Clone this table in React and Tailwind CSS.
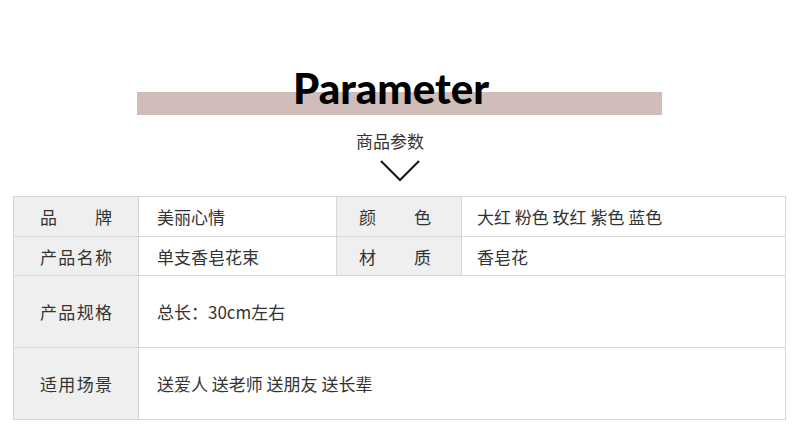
import React from 'react';

const cjk = { fontFamily: '"Noto Sans CJK SC", "Noto Sans", sans-serif' };

function Label({ chars, inner = '' }) {
  // label text is spread over a fixed width, like the 品 牌 cells
  return (
    <div className="flex h-full items-center justify-center bg-[#efefef] border-r border-b border-[#d6d6d6]">
      <div className={`flex w-[72px] justify-between text-[17px] leading-none text-[#333] ${inner}`}>
        {chars.split('').map((c, i) => (
          <span key={i}>{c}</span>
        ))}
      </div>
    </div>
  );
}

function Value({ children, span, pad = 'pl-[18px]' }) {
  return (
    <div
      className={`flex h-full items-center ${pad} text-[17px] leading-none text-[#333] border-r border-b border-[#d6d6d6] ${
        span ? 'col-span-3' : ''
      }`}
    >
      {children}
    </div>
  );
}

export default function App() {
  return (
    <div className="w-[800px] h-[438px] bg-white overflow-hidden flex flex-col" style={cjk}>
      {/* Heading band */}
      <div className="relative mt-[92px] ml-[137px] w-[525px] h-[23px] bg-[#d0bdb9]">
        <span
          className="absolute left-[156px] bottom-[6px] text-[42px] leading-none font-black text-black whitespace-nowrap"
          style={{ fontFamily: 'Lato, "Open Sans", sans-serif' }}
        >
          Parameter
        </span>
      </div>

      <div className="mt-[17px] ml-[356px] text-[17px] leading-[17px] text-[#333]">商品参数</div>

      <div className="mt-[11px] flex justify-center">
        <svg width="40" height="22" viewBox="0 0 40 22" fill="none">
          <path d="M1 1 L20 20 L39 1" stroke="#111" strokeWidth="2" />
        </svg>
      </div>

      {/* Parameter table */}
      <div className="mt-[14px] ml-[13px] w-[773px] grid grid-cols-[125px_198px_125px_324px] grid-rows-[40px_39px_72px_72px] border-l border-t border-[#d6d6d6]">
        <Label chars="品牌" />
        <Value>美丽心情</Value>
        <Label chars="颜色" inner="-translate-x-[4px]" />
        <Value pad="pl-[15px]">大红 粉色 玫红 紫色 蓝色</Value>

        <Label chars="产品名称" />
        <Value>单支香皂花束</Value>
        <Label chars="材质" inner="-translate-x-[4px]" />
        <Value pad="pl-[15px]">香皂花</Value>

        <Label chars="产品规格" />
        <Value span>总长：30cm左右</Value>

        <Label chars="适用场景" />
        <Value span>送爱人 送老师 送朋友 送长辈</Value>
      </div>
    </div>
  );
}
